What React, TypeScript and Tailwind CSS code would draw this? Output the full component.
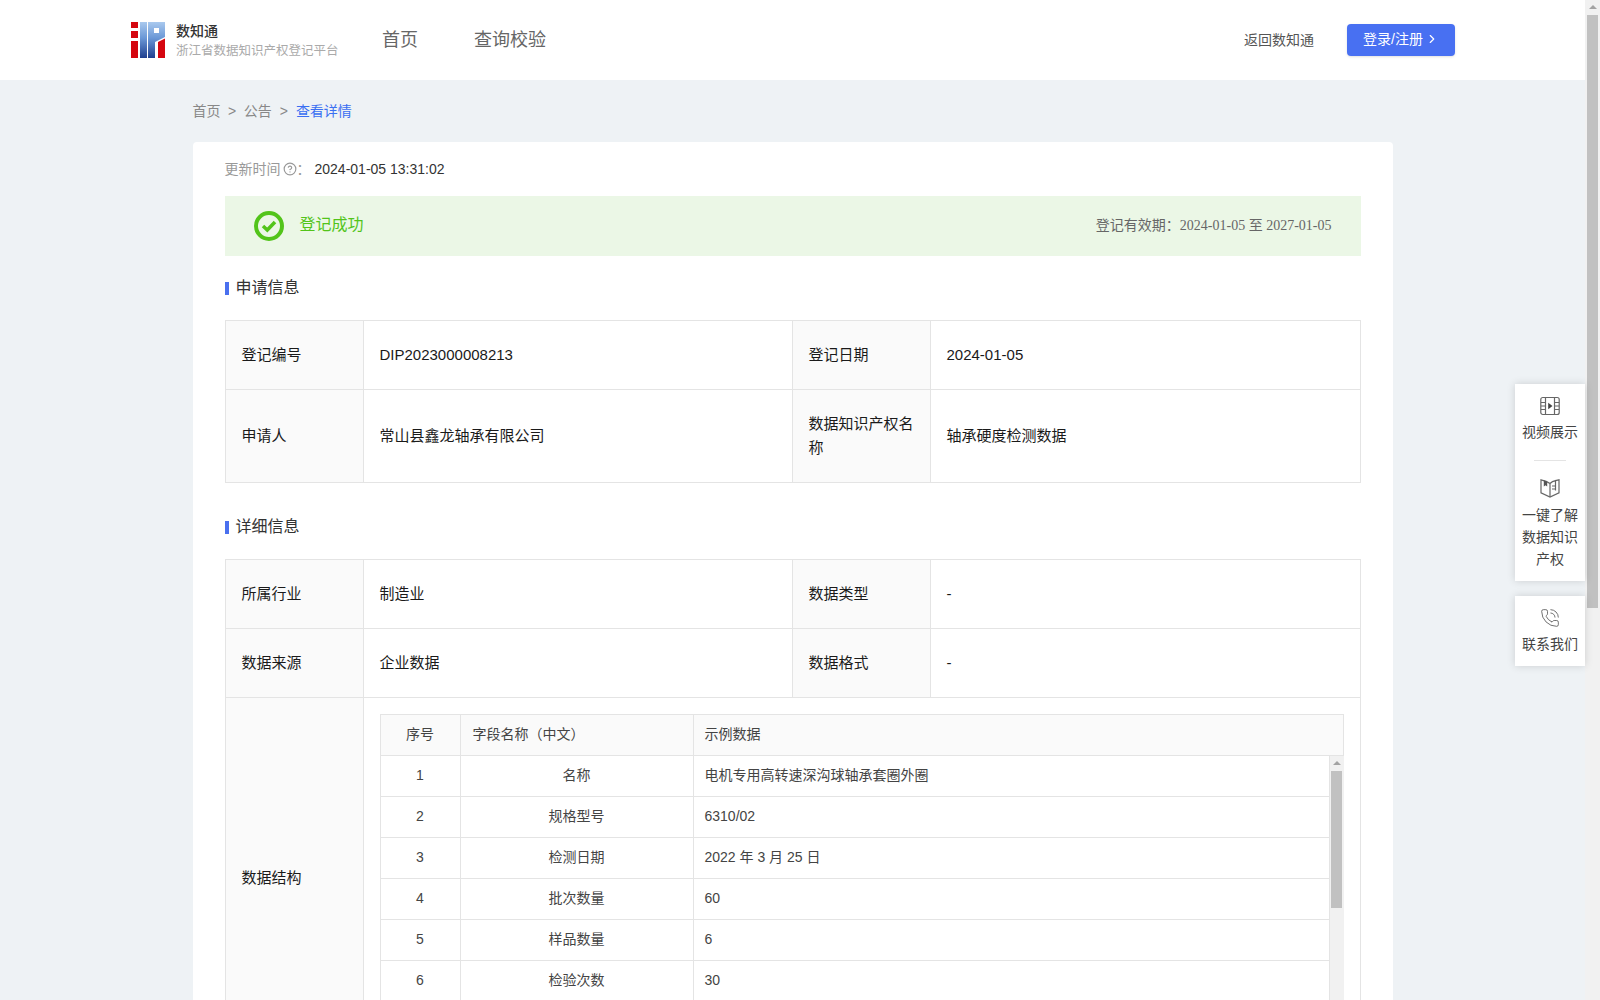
import { ChevronRight, CircleHelp, PhoneCall } from "lucide-react";

const fields = [
  ["1", "名称", "电机专用高转速深沟球轴承套圈外圈"],
  ["2", "规格型号", "6310/02"],
  ["3", "检测日期", "2022 年 3 月 25 日"],
  ["4", "批次数量", "60"],
  ["5", "样品数量", "6"],
  ["6", "检验次数", "30"],
];

function Logo() {
  return (
    <svg width="34" height="36" viewBox="0 0 34 36" className="shrink-0">
      <defs>
        <linearGradient id="logoBlue" x1="0" y1="0" x2="0" y2="1">
          <stop offset="0" stopColor="#a9c9ee" />
          <stop offset="0.45" stopColor="#6a97d6" />
          <stop offset="1" stopColor="#1f3f8f" />
        </linearGradient>
      </defs>
      <rect x="0" y="0" width="7" height="36" fill="#d5060f" />
      <rect x="0" y="6" width="7" height="3" fill="#fff" />
      <rect x="0" y="16" width="7" height="3" fill="#fff" />
      <rect x="9" y="0" width="7" height="36" fill="url(#logoBlue)" />
      <path d="M17 0H34V15L24 20V36H17Z" fill="url(#logoBlue)" />
      <rect x="23" y="6" width="5" height="5" fill="#fff" />
      <path d="M27 20L34 16.500V36H27Z" fill="#d5060f" />
    </svg>
  );
}

function SectionTitle({ text }: { text: string }) {
  return (
    <div className="flex h-6 items-center gap-[7px] text-base text-[#333]">
      <span className="mt-[3px] h-[13px] w-1 bg-[#4a70ef]" />
      <span className="mt-[2px]">{text}</span>
    </div>
  );
}

function Scrollbar({ className, thumb }: { className: string; thumb: string }) {
  return (
    <div className={"flex w-[15px] shrink-0 flex-col items-center bg-[#f1f1f1] " + className}>
      <div className="mt-[5px] h-0 w-0 border-x-[4px] border-b-[4px] border-x-transparent border-b-[#a3a3a3]" />
      <div className={"mt-[6px] w-[11px] bg-[#c1c1c1] " + thumb} />
    </div>
  );
}

const labelCell = "border border-[#e4e4e4] bg-[#fafafa] px-4 py-[22px] text-left align-middle text-[15px] font-normal leading-6";
const valueCell = "border border-[#e4e4e4] px-4 py-[22px] align-middle text-[15px] leading-6";

export default function App() {
  return (
    <div className="flex h-screen overflow-hidden bg-[#eef2f5] font-['Liberation_Sans','Noto_Sans_CJK_SC',sans-serif] text-sm">
      <div className="relative min-w-0 flex-1">
        <header className="flex h-20 items-center bg-white pl-[131px] pr-[130px]">
          <Logo />
          <div className="ml-[11px] w-[206px]">
            <div className="text-sm font-medium leading-5 text-[#333]">数知通</div>
            <div className="mt-px whitespace-nowrap text-[12.5px] leading-[18px] text-[#aaa]">浙江省数据知识产权登记平台</div>
          </div>
          <nav className="flex gap-14 text-lg text-[#666]">
            <a>首页</a>
            <a>查询校验</a>
          </nav>
          <div className="ml-auto flex items-center gap-[33px]">
            <a className="text-[#555]">返回数知通</a>
            <button className="flex h-8 w-[108px] items-center gap-[2px] rounded-sm bg-[#4870f2] pb-[2px] pl-4 text-white shadow-sm">
              登录/注册
              <ChevronRight size={14} strokeWidth={2} />
            </button>
          </div>
        </header>

        <main className="mx-auto w-[1200px]">
          <div className="flex h-[62px] items-center pb-px text-[#888]">
            <span>首页</span>
            <span className="mx-[7.5px]">&gt;</span>
            <span>公告</span>
            <span className="mx-2">&gt;</span>
            <span className="text-[#3a6ff2]">查看详情</span>
          </div>

          <div className="rounded-t bg-white px-8 pt-4">
            <div className="flex h-[22px] items-center text-[#999]">
              更新时间
              <CircleHelp size={14} strokeWidth={2} className="ml-[2px]" />
              <span className="w-[18px]">：</span>
              <span className="text-[#333]">2024-01-05 13:31:02</span>
            </div>

            <div className="mt-4 flex h-[60px] items-center bg-[#ebf7e6] pl-[29px] pr-[29px]">
              <svg width="30" height="30" viewBox="0 0 30 30" fill="none">
                <circle cx="15" cy="15" r="13" stroke="#52c41a" strokeWidth="4" />
                <path d="M9 15L13.300 19L21 11" stroke="#52c41a" strokeWidth="3.500" />
              </svg>
              <span className="-mt-[2px] ml-4 text-base text-[#52c41a]">登记成功</span>
              <span className="-mt-[2px] ml-auto text-[#666]">
                登记有效期：
                <span className="font-['Liberation_Serif','Noto_Sans_CJK_SC',serif]">2024-01-05 至 2027-01-05</span>
              </span>
            </div>

            <div className="mt-[19px]">
              <SectionTitle text="申请信息" />
            </div>
            <table className="mt-[21px] w-full table-fixed border-collapse text-[#1a1a1a]">
              <colgroup>
                <col className="w-[138px]" />
                <col className="w-[429px]" />
                <col className="w-[138px]" />
                <col />
              </colgroup>
              <tbody>
                <tr>
                  <th className={labelCell}>登记编号</th>
                  <td className={valueCell}>DIP2023000008213</td>
                  <th className={labelCell}>登记日期</th>
                  <td className={valueCell}>2024-01-05</td>
                </tr>
                <tr>
                  <th className={labelCell}>申请人</th>
                  <td className={valueCell}>常山县鑫龙轴承有限公司</td>
                  <th className={labelCell}>数据知识产权名称</th>
                  <td className={valueCell}>轴承硬度检测数据</td>
                </tr>
              </tbody>
            </table>

            <div className="mt-[31px]">
              <SectionTitle text="详细信息" />
            </div>
            <table className="mt-[21px] w-full table-fixed border-collapse text-[#1a1a1a]">
              <colgroup>
                <col className="w-[138px]" />
                <col className="w-[429px]" />
                <col className="w-[138px]" />
                <col />
              </colgroup>
              <tbody>
                <tr>
                  <th className={labelCell}>所属行业</th>
                  <td className={valueCell}>制造业</td>
                  <th className={labelCell}>数据类型</th>
                  <td className={valueCell}>-</td>
                </tr>
                <tr>
                  <th className={labelCell}>数据来源</th>
                  <td className={valueCell}>企业数据</td>
                  <th className={labelCell}>数据格式</th>
                  <td className={valueCell}>-</td>
                </tr>
                <tr>
                  <th className={labelCell}>数据结构</th>
                  <td colSpan={3} className="border border-[#e4e4e4] p-4">
                    <div className="h-[328px] overflow-hidden border-l border-t border-[#e4e4e4] text-[#444]">
                      <div className="grid h-[41px] grid-cols-[80px_233px_1fr] items-stretch border-b border-r border-[#e4e4e4] bg-[#fafafa] leading-[38px]">
                        <div className="border-r border-[#e4e4e4] text-center">序号</div>
                        <div className="border-r border-[#e4e4e4] pl-3">字段名称（中文）</div>
                        <div className="pl-[11px]">示例数据</div>
                      </div>
                      <div className="flex">
                        <div className="min-w-0 flex-1">
                          {fields.map((row) => (
                            <div key={row[0]} className="grid h-[41px] grid-cols-[80px_233px_1fr] border-b border-[#e4e4e4] leading-[39px]">
                              <div className="border-r border-[#e4e4e4] text-center">{row[0]}</div>
                              <div className="border-r border-[#e4e4e4] text-center">{row[1]}</div>
                              <div className="pl-[11px]">{row[2]}</div>
                            </div>
                          ))}
                        </div>
                        <Scrollbar className="h-[287px] border-l border-[#e4e4e4]" thumb="h-[137px]" />
                      </div>
                    </div>
                  </td>
                </tr>
              </tbody>
            </table>
          </div>
        </main>

        <aside className="absolute right-0 top-[384px] w-[70px] text-center leading-[22px] text-[#444]">
          <div className="bg-white pb-[11px] pt-3 shadow-[0_0_8px_rgba(0,0,0,0.15)]">
            <svg width="20" height="20" viewBox="0 0 20 20" fill="none" stroke="#666" strokeWidth="1.200" className="mx-auto">
              <rect x="0.800" y="1.500" width="18.400" height="17" rx="2" />
              <path d="M5.500 1.500V18.500M14.500 1.500V18.500M1 6.500H5.500M1 10H5.500M1 13.500H5.500M14.500 6.500H19M14.500 10H19M14.500 13.500H19" />
              <path d="M8.200 6.800L12.500 10L8.200 13.200Z" fill="#444" stroke="none" />
            </svg>
            <div className="mt-[5px]">视频展示</div>
            <div className="mx-auto my-[17px] h-px w-8 bg-[#e4e4e4]" />
            <svg width="20" height="20" viewBox="0 0 20 20" fill="none" stroke="#666" strokeWidth="1.200" className="mx-auto">
              <path d="M10 5.500C8 3.800 5 2.500 1 1.800V14.800L10 19L19 14.800V1.800L15.500 2.600" />
              <path d="M10 5.500V19M10 5.500C11.500 4 13.500 3 15.500 2.600V12.500" />
              <path d="M3.800 2.300V8.500L5.500 7.200L7.200 8.500V3.800Z" fill="#555" stroke="none" />
              <path d="M12 8H15M12 11H15" />
            </svg>
            <div className="mt-[6px] px-[6px]">一键了解数据知识产权</div>
          </div>
          <div className="mt-[15px] h-[70px] bg-white pt-3 shadow-[0_0_8px_rgba(0,0,0,0.15)]">
            <PhoneCall size={20} strokeWidth={1} className="mx-auto text-[#555]" />
            <div className="mt-[5px]">联系我们</div>
          </div>
        </aside>
      </div>
      <Scrollbar className="h-full" thumb="h-[593px]" />
    </div>
  );
}
